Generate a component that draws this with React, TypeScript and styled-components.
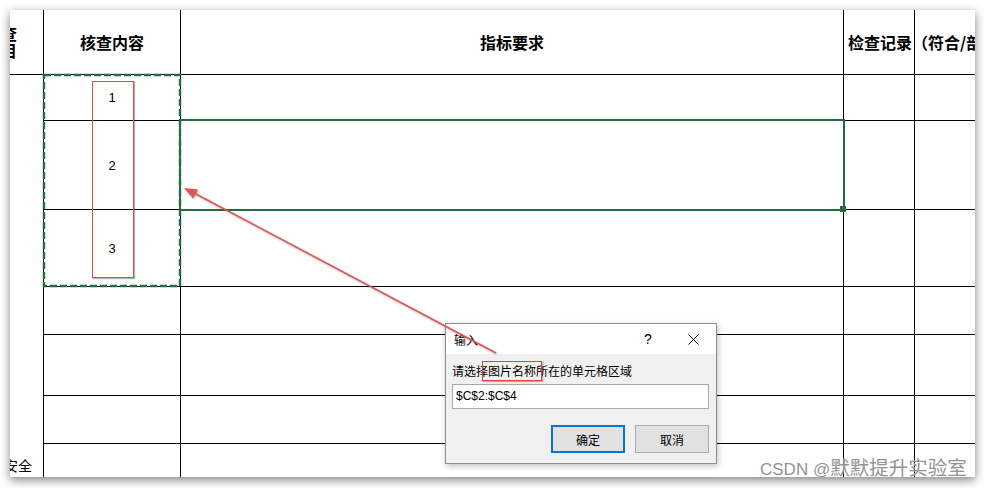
import React from 'react';
import styled, { createGlobalStyle } from 'styled-components';

const GlobalStyle = createGlobalStyle`
  html, body {
    margin: 0;
    padding: 0;
    background: #fff;
  }
  body {
    font-family: "Noto Sans CJK SC", "Liberation Sans", sans-serif;
  }
`;

// column widths / row heights of the sheet (each includes its 1px grid line)
const COLS = [34, 137, 663, 71, 80];
const ROWS = [65, 46, 89, 77, 48, 61, 48, 40];
const CELL_NUMBERS = ['1', '2', '3', '', '', '', ''];

const EXCEL_GREEN = '#1f6e43';

const Page = styled.div`
  position: relative;
  width: 985px;
  height: 488px;
  padding: 10px;
  box-sizing: border-box;
  overflow: hidden;
  background: #fff;
`;

const Paper = styled.div`
  position: relative;
  width: 965px;
  height: 467px;
  background: #fff;
  overflow: hidden;
  box-shadow: 0 3px 9px rgba(0, 0, 0, 0.5);
`;

const Sheet = styled.div`
  display: grid;
  grid-template-columns: ${COLS.map(c => `${c}px`).join(' ')};
  grid-template-rows: ${ROWS.map(r => `${r}px`).join(' ')};
`;

const Cell = styled.div<{ $justify?: string }>`
  box-sizing: border-box;
  min-width: 0;
  border-right: 1px solid #000;
  border-bottom: 1px solid #000;
  display: flex;
  align-items: center;
  justify-content: ${p => p.$justify || 'center'};
  font-family: "Liberation Sans", "Noto Sans CJK SC", sans-serif;
  font-size: 13px;
  color: #000;
`;

const HeaderCell = styled(Cell)`
  font-family: "Noto Sans CJK SC", sans-serif;
  font-size: 16px;
  font-weight: 700;
  white-space: nowrap;
`;

const CornerHeader = styled(HeaderCell)`
  overflow: hidden;
  padding-right: 26px;
`;

const CornerText = styled.div`
  flex: none;
  line-height: 17px;
  text-align: right;
`;

const OverflowHeader = styled(HeaderCell)`
  padding-left: 4px;
  position: relative;
  z-index: 1;
`;

const SideCell = styled.div`
  grid-column: 1;
  grid-row: 2 / -1;
  box-sizing: border-box;
  border-right: 1px solid #000;
  display: flex;
  align-items: flex-end;
  justify-content: flex-end;
  padding: 0 11px 9px 0;
  overflow: hidden;
  white-space: nowrap;
  font-family: "Noto Sans CJK SC", sans-serif;
  font-size: 14px;
  line-height: 20px;
`;

const Marquee = styled.svg`
  position: absolute;
  left: 0;
  top: 0;
  pointer-events: none;
`;

const Selection = styled.div`
  position: absolute;
  left: 169px;
  top: 109px;
  width: 666px;
  height: 92px;
  box-sizing: border-box;
  border: 2px solid ${EXCEL_GREEN};
`;

const FillHandle = styled.div`
  position: absolute;
  left: 830px;
  top: 196px;
  width: 6px;
  height: 6px;
  background: ${EXCEL_GREEN};
`;

const RedFrame = styled.div`
  position: absolute;
  left: 82px;
  top: 71px;
  width: 42px;
  height: 197px;
  box-sizing: border-box;
  border: 1px solid #ee4444;
  box-shadow: 1px 1px 1px rgba(0, 0, 0, 0.3);
`;

const Dialog = styled.div`
  position: absolute;
  left: 435px;
  top: 313px;
  width: 272px;
  height: 141px;
  box-sizing: border-box;
  border: 1px solid #8e8e8e;
  background: #f0f0f0;
  box-shadow: 1px 2px 6px rgba(0, 0, 0, 0.25);
  display: flex;
  flex-direction: column;
  font-family: "Noto Sans CJK SC", "Liberation Sans", sans-serif;
  font-size: 12px;
  color: #000;
`;

const TitleBar = styled.div`
  height: 30px;
  flex: none;
  background: #fff;
  display: flex;
  align-items: center;
  padding-left: 8px;
`;

const TitleText = styled.div`
  flex: 1;
`;

const TitleButton = styled.div<{ $w: number }>`
  width: ${p => p.$w}px;
  height: 30px;
  display: flex;
  align-items: center;
  justify-content: center;
  font-family: "Liberation Sans", sans-serif;
  font-size: 14px;
`;

const DialogBody = styled.div`
  padding: 9px 7px 0 6px;
  display: flex;
  flex-direction: column;
`;

const Prompt = styled.div`
  line-height: 16px;
  height: 16px;
  white-space: nowrap;
`;

const Marked = styled.span`
  position: relative;
  display: inline-block;
  line-height: 16px;
  &::after {
    content: '';
    position: absolute;
    left: -6px;
    right: -6px;
    top: -2px;
    bottom: -2px;
    border: 1px solid #e5403f;
    box-shadow: 1px 1px 1px rgba(0, 0, 0, 0.25);
  }
`;

const RangeInput = styled.div`
  margin-top: 5px;
  height: 25px;
  box-sizing: border-box;
  border: 1px solid #a8a8a8;
  background: #fff;
  padding-left: 3px;
  line-height: 23px;
  font-family: "Liberation Sans", sans-serif;
  font-size: 12px;
`;

const ButtonRow = styled.div`
  margin-top: 16px;
  display: flex;
  justify-content: flex-end;
  gap: 10px;
`;

const DialogButton = styled.div<{ $primary?: boolean }>`
  width: 74px;
  height: 28px;
  box-sizing: border-box;
  background: #e1e1e1;
  border: ${p => (p.$primary ? '2px solid #0078d7' : '1px solid #adadad')};
  display: flex;
  align-items: center;
  justify-content: center;
`;

const Arrow = styled.svg`
  position: absolute;
  left: 0;
  top: 0;
  pointer-events: none;
  filter: drop-shadow(1px 1px 1px rgba(0, 0, 0, 0.3));
`;

const Watermark = styled.div`
  position: absolute;
  left: 760px;
  top: 457px;
  white-space: nowrap;
  color: #939393;
  font-family: "Liberation Sans", sans-serif;
  font-size: 17px;
  line-height: 20px;
  text-shadow: 0 0 1px #fff;
`;

const WatermarkCjk = styled.span`
  font-family: "Noto Sans CJK SC", sans-serif;
  font-size: 19.5px;
  line-height: 20px;
`;

const CloseIcon = () => (
  <svg width="11" height="11" viewBox="0 0 11 11">
    <path d="M0.5 0.5 L10.5 10.5 M10.5 0.5 L0.5 10.5" stroke="#000" strokeWidth="1" />
  </svg>
);

const App: React.FC = () => {
  return (
    <>
      <GlobalStyle />
      <Page>
        <Paper>
          <Sheet>
            <CornerHeader $justify="flex-end">
              <CornerText>
                检查
                <br />
                项目
              </CornerText>
            </CornerHeader>
            <HeaderCell>核查内容</HeaderCell>
            <HeaderCell>指标要求</HeaderCell>
            <OverflowHeader $justify="flex-start">检查记录（符合/部分符合/不符合）</OverflowHeader>
            <HeaderCell />
            <SideCell>安全</SideCell>
            {CELL_NUMBERS.map((n, i) => (
              <React.Fragment key={i}>
                <Cell>{n}</Cell>
                <Cell />
                <Cell />
                <Cell />
              </React.Fragment>
            ))}
          </Sheet>

          <Selection />
          <FillHandle />
          <Marquee width="965" height="467">
            <rect
              x="34"
              y="65"
              width="136"
              height="211"
              fill="none"
              stroke={EXCEL_GREEN}
              strokeWidth="2.4"
              strokeDasharray="7 3"
            />
          </Marquee>
          <RedFrame />

          <Dialog>
            <TitleBar>
              <TitleText>输入</TitleText>
              <TitleButton $w={44}>?</TitleButton>
              <TitleButton $w={46}>
                <CloseIcon />
              </TitleButton>
            </TitleBar>
            <DialogBody>
              <Prompt>
                请选择<Marked>图片名称</Marked>所在的单元格区域
              </Prompt>
              <RangeInput>$C$2:$C$4</RangeInput>
              <ButtonRow>
                <DialogButton $primary>确定</DialogButton>
                <DialogButton>取消</DialogButton>
              </ButtonRow>
            </DialogBody>
          </Dialog>

          <Arrow width="965" height="467">
            <line x1="486" y1="343" x2="184" y2="183" stroke="#e25454" strokeWidth="1.6" />
            <polygon points="174,178 188,179.4 183,188.6" fill="#e25454" />
          </Arrow>
        </Paper>
        <Watermark>
          CSDN @<WatermarkCjk>默默提升实验室</WatermarkCjk>
        </Watermark>
      </Page>
    </>
  );
};

export default App;
